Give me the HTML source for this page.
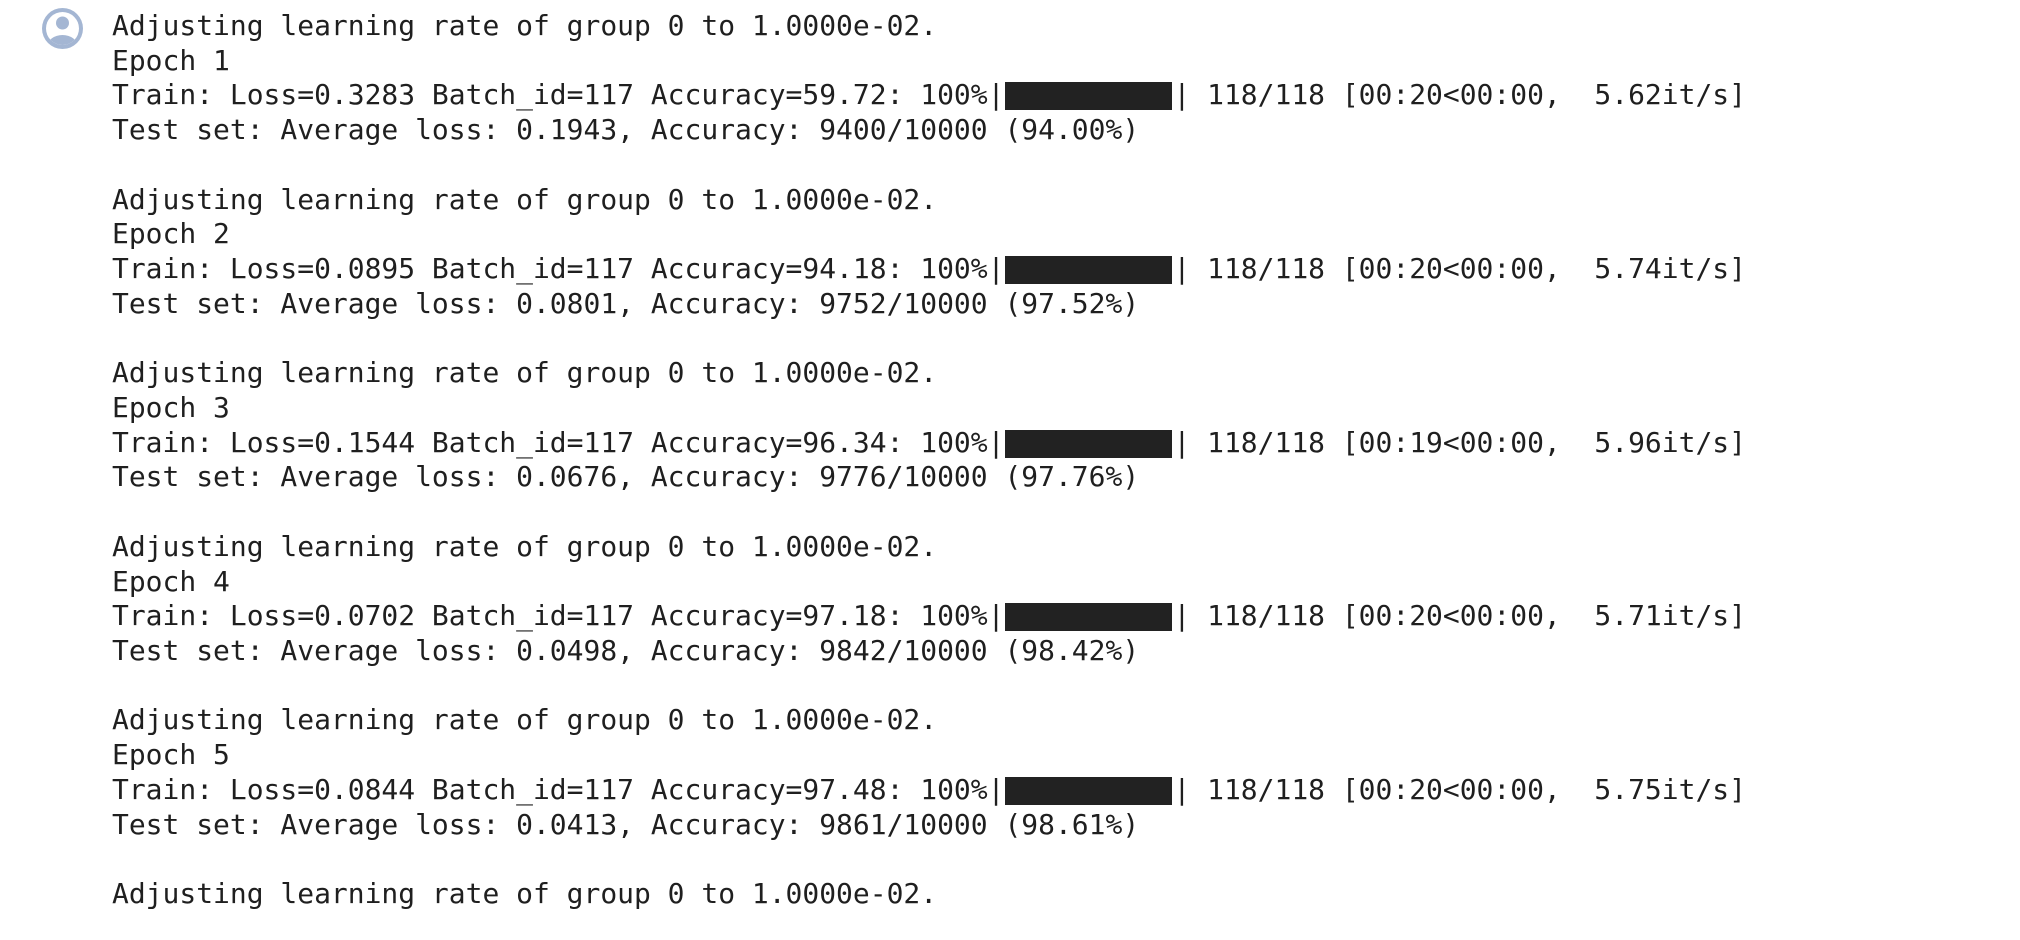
<!DOCTYPE html>
<html><head><meta charset="utf-8"><style>
html,body{margin:0;padding:0;background:#fff;width:2020px;height:940px;overflow:hidden}
pre{position:absolute;left:112px;top:9px;margin:0;font-family:"DejaVu Sans Mono","Liberation Mono",monospace;font-size:27.97px;line-height:34.72px;color:#1f1f1f;white-space:pre}
.bar{display:inline-block;width:169px;height:28px;position:relative;vertical-align:-6px}
.bar:after{content:"";position:absolute;left:1px;right:1px;top:0;bottom:0;background:#222}
</style></head><body>
<svg style="position:absolute;left:42px;top:8px" width="41" height="41" viewBox="0 0 41 41">
<defs><clipPath id="c"><circle cx="20.5" cy="20.5" r="16.5"/></clipPath></defs>
<circle cx="20.5" cy="20.5" r="20.5" fill="#a4b6d3"/>
<circle cx="20.5" cy="20.5" r="16.5" fill="#fff"/>
<g clip-path="url(#c)" fill="#a4b6d3"><circle cx="20.5" cy="15" r="6.5"/><ellipse cx="20.5" cy="38" rx="15" ry="11"/></g>
</svg>
<pre>Adjusting learning rate of group 0 to 1.0000e-02.
Epoch 1
Train: Loss=0.3283 Batch_id=117 Accuracy=59.72: 100%|<span class="bar"></span>| 118/118 [00:20&lt;00:00,  5.62it/s]
Test set: Average loss: 0.1943, Accuracy: 9400/10000 (94.00%)

Adjusting learning rate of group 0 to 1.0000e-02.
Epoch 2
Train: Loss=0.0895 Batch_id=117 Accuracy=94.18: 100%|<span class="bar"></span>| 118/118 [00:20&lt;00:00,  5.74it/s]
Test set: Average loss: 0.0801, Accuracy: 9752/10000 (97.52%)

Adjusting learning rate of group 0 to 1.0000e-02.
Epoch 3
Train: Loss=0.1544 Batch_id=117 Accuracy=96.34: 100%|<span class="bar"></span>| 118/118 [00:19&lt;00:00,  5.96it/s]
Test set: Average loss: 0.0676, Accuracy: 9776/10000 (97.76%)

Adjusting learning rate of group 0 to 1.0000e-02.
Epoch 4
Train: Loss=0.0702 Batch_id=117 Accuracy=97.18: 100%|<span class="bar"></span>| 118/118 [00:20&lt;00:00,  5.71it/s]
Test set: Average loss: 0.0498, Accuracy: 9842/10000 (98.42%)

Adjusting learning rate of group 0 to 1.0000e-02.
Epoch 5
Train: Loss=0.0844 Batch_id=117 Accuracy=97.48: 100%|<span class="bar"></span>| 118/118 [00:20&lt;00:00,  5.75it/s]
Test set: Average loss: 0.0413, Accuracy: 9861/10000 (98.61%)

Adjusting learning rate of group 0 to 1.0000e-02.</pre>
</body></html>
